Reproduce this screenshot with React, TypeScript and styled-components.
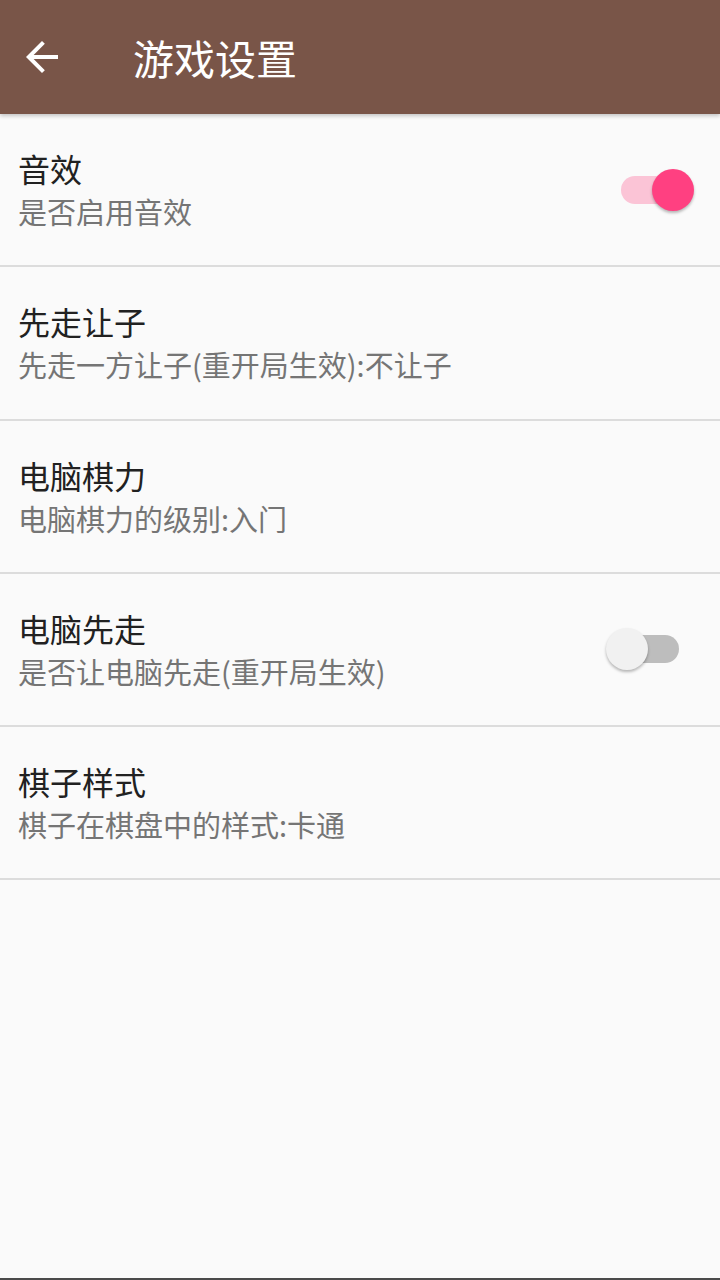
import React, { FC } from 'react'
import styled, { createGlobalStyle } from 'styled-components'

interface Setting {
  id: string
  title: string
  summary: string
  toggle?: boolean
  checked?: boolean
}

const settings: Setting[] = [
  { id: 'sound', title: '音效', summary: '是否启用音效', toggle: true, checked: true },
  { id: 'handicap', title: '先走让子', summary: '先走一方让子(重开局生效):不让子' },
  { id: 'level', title: '电脑棋力', summary: '电脑棋力的级别:入门' },
  { id: 'aiFirst', title: '电脑先走', summary: '是否让电脑先走(重开局生效)', toggle: true, checked: false },
  { id: 'style', title: '棋子样式', summary: '棋子在棋盘中的样式:卡通' },
]

const GlobalStyle = createGlobalStyle`
  html, body {
    margin: 0;
    padding: 0;
    background: #fafafa;
  }
  body {
    font-family: Roboto, "Noto Sans CJK SC", sans-serif;
  }
`

const App: FC = () => {
  return (
    <Page>
      <GlobalStyle />
      <AppBar>
        <BackButton aria-label="返回">
          <svg width="48" height="48" viewBox="0 0 24 24">
            <path d="M20 11H7.83l5.59-5.59L12 4l-8 8 8 8 1.41-1.41L7.83 13H20v-2z" fill="#ffffff" />
          </svg>
        </BackButton>
        <BarTitle>游戏设置</BarTitle>
      </AppBar>
      <List>
        {settings.map((item) => (
          <Row key={item.id}>
            <TextBlock>
              <Title>{item.title}</Title>
              <Summary>{item.summary}</Summary>
            </TextBlock>
            {item.toggle && (
              <Switch>
                <Track checked={!!item.checked} />
                <Thumb checked={!!item.checked} />
              </Switch>
            )}
          </Row>
        ))}
      </List>
      <Filler />
    </Page>
  )
}

const Page = styled.div`
  display: flex;
  flex-direction: column;
  height: 1280px;
  background: #fafafa;
  border-bottom: 2px solid #4a4a4a;
  box-sizing: border-box;
`
const AppBar = styled.header`
  display: flex;
  align-items: center;
  height: 114px;
  flex-shrink: 0;
  background: #795548;
  box-shadow: 0 2px 4px rgba(0, 0, 0, 0.22);
  position: relative;
  z-index: 1;
`
const BackButton = styled.div`
  display: flex;
  align-items: center;
  justify-content: center;
  width: 48px;
  height: 48px;
  margin-left: 18px;
`
const BarTitle = styled.div`
  margin-left: 67px;
  color: #ffffff;
  font-size: 41px;
  line-height: 48px;
  font-family: "Noto Sans CJK SC", sans-serif;
`
const List = styled.div`
  display: flex;
  flex-direction: column;
`
const Row = styled.div`
  display: flex;
  align-items: center;
  height: 151.25px;
  padding: 0 26px 0 18px;
  border-bottom: 2px solid #dcdcdc;
`
const TextBlock = styled.div`
  flex: 1;
  display: flex;
  flex-direction: column;
  font-family: "Noto Sans CJK SC", sans-serif;
`
const Title = styled.div`
  font-size: 32px;
  line-height: 40px;
  color: #212121;
`
const Summary = styled.div`
  margin-top: 3px;
  font-size: 29px;
  line-height: 40px;
  color: #757575;
`
const Switch = styled.div`
  position: relative;
  width: 88px;
  height: 44px;
`
const Track = styled.div<{ checked: boolean }>`
  position: absolute;
  left: 15px;
  right: 15px;
  top: 8px;
  height: 28px;
  border-radius: 14px;
  background: ${(p) => (p.checked ? '#fbc4d6' : '#bdbdbd')};
`
const Thumb = styled.div<{ checked: boolean }>`
  position: absolute;
  top: 1px;
  ${(p) => (p.checked ? 'right: 0;' : 'left: 0;')}
  width: 42px;
  height: 42px;
  border-radius: 50%;
  background: ${(p) => (p.checked ? '#ff4081' : '#f1f1f1')};
  box-shadow: 0 2px 3px rgba(0, 0, 0, 0.28);
`
const Filler = styled.div`
  flex: 1;
`

export default App
